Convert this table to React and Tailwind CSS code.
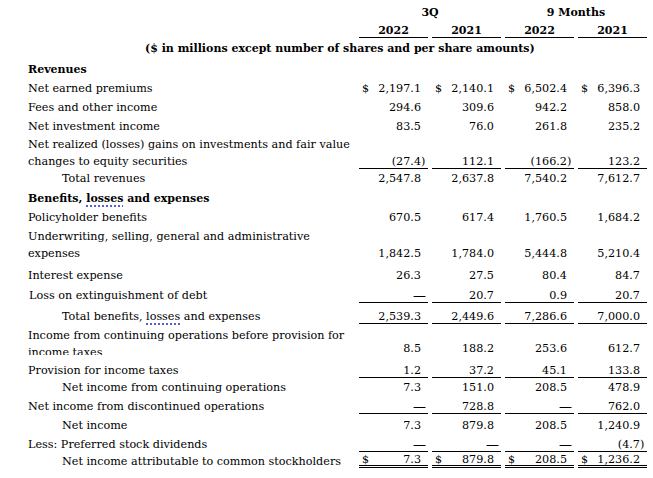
import React from "react";

const FONT = { fontFamily: '"DejaVu Serif", serif' };

function Num({ v, dollar, border, last }) {
  let neg = false;
  let text = v;
  let dash = v === "—";
  if (v && v.startsWith("(")) {
    neg = true;
    text = v.slice(0, -1);
  }
  const borderCls =
    border === "double"
      ? "border-b-[3px] border-double border-black"
      : border
      ? "border-b border-black"
      : "border-b border-transparent";
  return (
    <div className={`mx-[2px] flex justify-between pl-[3px] pr-[2px] whitespace-nowrap ${borderCls} ${last ? "leading-[11px]" : "leading-[13px]"}`}>
      <span>{dollar ? "$" : ""}</span>
      {dash ? (
        <span className="text-[13px]">—</span>
      ) : (
        <span className="flex">
          <span>{text}</span>
          <span className="inline-block w-[5px]">{neg ? ")" : ""}</span>
        </span>
      )}
    </div>
  );
}

function Row({ h, label, indent, bold, vals, dollar, border, last, clip, labelNode }) {
  return (
    <div className={`grid grid-cols-[357px_73px_73px_73px_73px] grid-rows-[100%] items-end ${h}`}>
      {clip ? (
        <div className="self-start h-[31px] overflow-hidden pl-[28px] pt-[3px] leading-[17px] whitespace-nowrap">{labelNode || label}</div>
      ) : (
        <div
          className={`whitespace-nowrap ${indent ? "pl-[62px]" : "pl-[28px]"} ${bold ? "font-bold text-[11px]" : ""} ${last ? "leading-[12px]" : "leading-[17px] mb-[-1px]"}`}
        >
          {labelNode || label}
        </div>
      )}
      {vals
        ? vals.map((v, i) => <Num key={i} v={v} dollar={dollar} border={border} last={last} />)
        : [0, 1, 2, 3].map((i) => <div key={i} />)}
    </div>
  );
}

const Losses = () => (
  <span className="underline decoration-dotted decoration-[#5b5bd6] decoration-2 underline-offset-[3px]">losses</span>
);

export default function App() {
  return (
    <div className="w-[653px] h-[478px] bg-white text-black text-[11.2px] overflow-hidden" style={FONT}>
      <div className="grid grid-cols-[357px_146px_146px] items-end h-[20px] font-bold text-[11px] leading-[15px]">
        <div />
        <div className="text-center">3Q</div>
        <div className="text-center">9 Months</div>
      </div>
      <div className="grid grid-cols-[357px_73px_73px_73px_73px] items-end h-[18px] font-bold text-[11px]">
        <div />
        {["2022", "2021", "2022", "2021"].map((y, i) => (
          <div key={i} className="mx-[2px] border-b border-black text-center leading-[13px]">
            {y}
          </div>
        ))}
      </div>
      <div className="flex items-end h-[18px] font-bold text-[11px] leading-[15px] pl-[145px] whitespace-nowrap">
        ($ in millions except number of shares and per share amounts)
      </div>
      <Row h="h-[21px]" label="Revenues" bold />
      <Row h="h-[19px]" label="Net earned premiums" vals={["2,197.1", "2,140.1", "6,502.4", "6,396.3"]} dollar />
      <Row h="h-[19px]" label="Fees and other income" vals={["294.6", "309.6", "942.2", "858.0"]} />
      <Row h="h-[19px]" label="Net investment income" vals={["83.5", "76.0", "261.8", "235.2"]} />
      <Row
        h="h-[35px]"
        labelNode={
          <>
            Net realized (losses) gains on investments and fair value
            <br />
            changes to equity securities
          </>
        }
        vals={["(27.4)", "112.1", "(166.2)", "123.2"]}
        border
      />
      <Row h="h-[17px]" label="Total revenues" indent vals={["2,547.8", "2,637.8", "7,540.2", "7,612.7"]} />
      <Row
        h="h-[20px]"
        bold
        labelNode={
          <>
            Benefits, <Losses /> and expenses
          </>
        }
      />
      <Row h="h-[19px]" label="Policyholder benefits" vals={["670.5", "617.4", "1,760.5", "1,684.2"]} />
      <Row
        h="h-[36px]"
        labelNode={
          <>
            Underwriting, selling, general and administrative
            <br />
            expenses
          </>
        }
        vals={["1,842.5", "1,784.0", "5,444.8", "5,210.4"]}
      />
      <Row h="h-[22px]" label="Interest expense" vals={["26.3", "27.5", "80.4", "84.7"]} />
      <Row
        h="h-[20px]"
        labelNode={<span className="pl-[1px]">Loss on extinguishment of debt</span>}
        vals={["—", "20.7", "0.9", "20.7"]}
        border
      />
      <Row
        h="h-[21px]"
        indent
        labelNode={
          <>
            Total benefits, <Losses /> and expenses
          </>
        }
        vals={["2,539.3", "2,449.6", "7,286.6", "7,000.0"]}
        border
      />
      <Row
        h="h-[32px]"
        clip
        labelNode={
          <>
            Income from continuing operations before provision for
            <br />
            income taxes
          </>
        }
        vals={["8.5", "188.2", "253.6", "612.7"]}
      />
      <Row h="h-[22px]" label="Provision for income taxes" vals={["1.2", "37.2", "45.1", "133.8"]} border />
      <Row h="h-[17px]" label="Net income from continuing operations" indent vals={["7.3", "151.0", "208.5", "478.9"]} />
      <Row h="h-[19px]" label="Net income from discontinued operations" vals={["—", "728.8", "—", "762.0"]} border />
      <Row h="h-[19px]" label="Net income" indent vals={["7.3", "879.8", "208.5", "1,240.9"]} />
      <Row h="h-[19px]" label="Less: Preferred stock dividends" vals={["—", "—", "—", "(4.7)"]} border />
      <Row
        h="h-[16px]"
        label="Net income attributable to common stockholders"
        indent
        last
        vals={["7.3", "879.8", "208.5", "1,236.2"]}
        dollar
        border="double"
      />
    </div>
  );
}
